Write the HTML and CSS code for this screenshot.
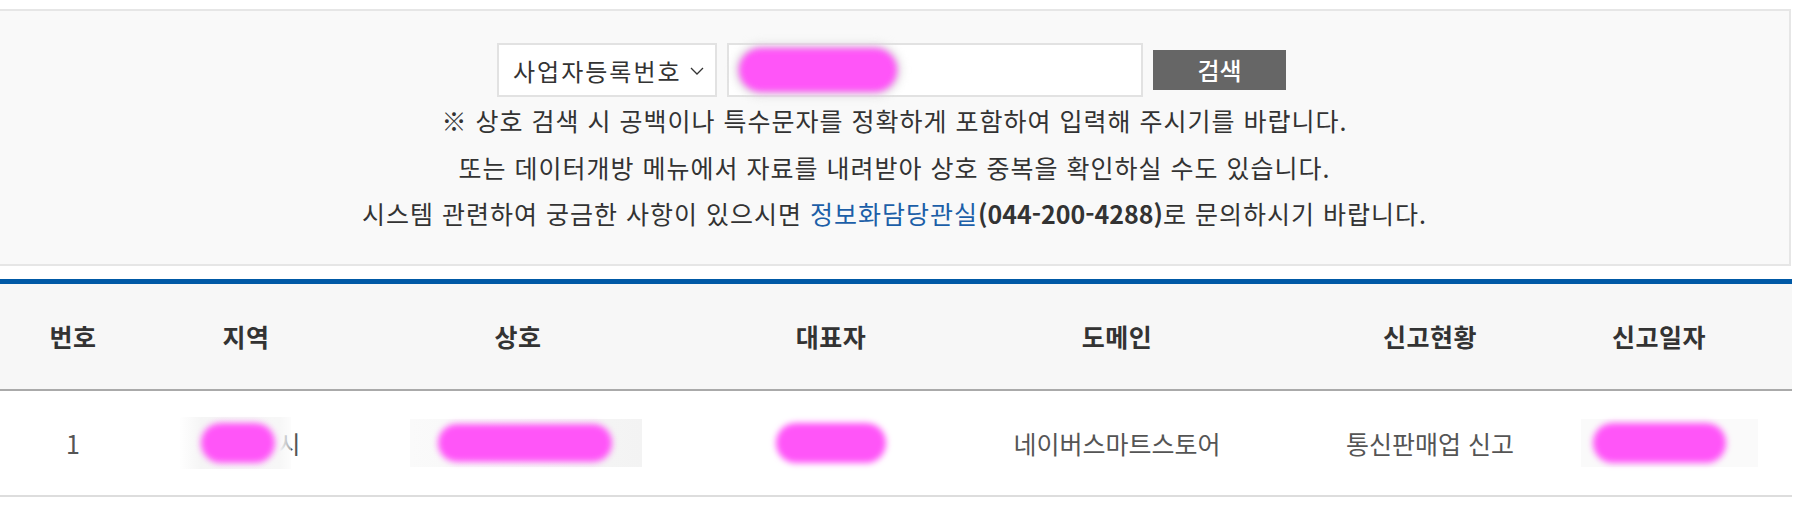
FILE: index.html
```html
<!DOCTYPE html>
<html lang="ko">
<head>
<meta charset="utf-8">
<link rel="stylesheet" href="styles.css">
</head>
<body>
<div class="page">
  <section class="search-panel">
    <form class="search-row">
      <div class="select-box">
        <span>사업자등록번호</span>
        <svg class="chev" width="14" height="8" viewBox="0 0 14 8"><path d="M1 1 L7 7 L13 1" fill="none" stroke="#333" stroke-width="1.3"/></svg>
      </div>
      <div class="input-box"><span class="blob blob-input"></span></div>
      <button type="button" class="btn-search">검색</button>
    </form>
    <p class="note">※ 상호 검색 시 공백이나 특수문자를 정확하게 포함하여 입력해 주시기를 바랍니다.</p>
    <p class="note">또는 데이터개방 메뉴에서 자료를 내려받아 상호 중복을 확인하실 수도 있습니다.</p>
    <p class="note">시스템 관련하여 궁금한 사항이 있으시면 <a class="link">정보화담당관실</a><b>(044-200-4288)</b>로 문의하시기 바랍니다.</p>
  </section>

  <div class="table">
    <div class="row head">
      <div class="c c1">번호</div>
      <div class="c c2">지역</div>
      <div class="c c3">상호</div>
      <div class="c c4">대표자</div>
      <div class="c c5">도메인</div>
      <div class="c c6">신고현황</div>
      <div class="c c7">신고일자</div>
    </div>
    <div class="row body">
      <div class="c c1">1</div>
      <div class="c c2"><span class="blur-bg bg-region"><span class="blob blob-region"></span></span><span class="si">시</span></div>
      <div class="c c3"><span class="blur-bg bg-name"><span class="blob blob-name"></span></span></div>
      <div class="c c4"><span class="blob blob-rep"></span></div>
      <div class="c c5">네이버스마트스토어</div>
      <div class="c c6">통신판매업 신고</div>
      <div class="c c7"><span class="blur-bg bg-date"><span class="blob blob-date"></span></span></div>
    </div>
  </div>
</div>
</body>
</html>
```
FILE: styles.css
```css
* { box-sizing: border-box; }
html, body { margin: 0; padding: 0; background: #fff; }
body {
  font-family: "Noto Sans CJK KR", "Noto Sans", sans-serif;
  color: #333;
}
.page {
  width: 1792px;
  padding-top: 9px;
}
.search-panel {
  width: 1791px;
  background: #f9f9f9;
  border: 2px solid #e6e6e6;
  border-left: none;
  padding: 32px 0 27px;
  text-align: center;
}
.search-row {
  display: flex;
  justify-content: center;
  align-items: center;
  gap: 10px;
  margin: 0 0 0 -6px;
}
.select-box {
  width: 220px;
  height: 54px;
  background: #fff;
  border: 2px solid #e2e2e2;
  display: flex;
  align-items: center;
  padding-left: 14px;
  gap: 8px;
  font-size: 24px;
  letter-spacing: 2px;
  color: #333;
}
.chev { margin-top: 2px; flex: none; }
.input-box {
  width: 416px;
  height: 54px;
  background: #fff;
  border: 2px solid #e2e2e2;
  position: relative;
}
.btn-search {
  width: 133px;
  height: 40px;
  background: #666;
  color: #fff;
  border: none;
  font-family: inherit;
  font-size: 24px;
  font-weight: 500;
  padding: 0;
  line-height: 40px;
}
.note {
  margin: 0;
  font-size: 25px;
  line-height: 46.5px;
  color: #333;
  letter-spacing: 1px;
}
.note .link { color: #1c5fa8; }
.note b { font-weight: 700; color: #333; letter-spacing: 0; }

.table {
  margin-top: 13px;
  border-top: 5px solid #0059a6;
  width: 1792px;
}
.row {
  display: grid;
  grid-template-columns: 146px 200px 344px 282px 290px 336px 122px;
  padding-right: 72px;
  align-items: center;
}
.row.head {
  height: 107px;
  background: #f7f7f7;
  border-bottom: 2px solid #aaa;
  font-weight: 700;
  font-size: 25px;
  letter-spacing: 0.5px;
  color: #333;
}
.row.body {
  height: 106px;
  border-bottom: 2px solid #ddd;
  font-size: 25px;
  color: #555;
}
.c {
  text-align: center;
  display: flex;
  justify-content: center;
  align-items: center;
  white-space: nowrap;
}
.blob {
  display: inline-block;
  background: #ff55f8;
  border-radius: 20px;
  filter: blur(3px);
}
.blur-bg {
  display: inline-flex;
  align-items: center;
  background: #f6f6f6;
  flex: none;
}
.blob-input {
  position: absolute;
  left: 10px;
  top: 3px;
  width: 158px;
  height: 44px;
  border-radius: 22px;
  box-shadow: 0 0 6px 4px #ddd;
}
.bg-region {
  position: relative;
  z-index: 1;
  width: 112px;
  height: 52px;
  padding-left: 22px;
  margin-left: -12px;
  background: linear-gradient(90deg, #fff 0%, #f5f5f5 20%, #f7f7f7 90%, rgba(250,250,250,0.5) 100%);
}
.blob-region { width: 74px; height: 40px; }
.si { margin-left: -14px; color: #555; }
.bg-name { width: 232px; height: 48px; padding-left: 28px; margin-left: 16px; background: linear-gradient(90deg, #fafafa, #f3f3f3); }
.blob-name { width: 174px; height: 38px; }
.blob-rep { width: 110px; height: 40px; }
.bg-date { width: 177px; height: 48px; padding-left: 12px; margin-left: 21px; background: #fafafa; }
.blob-date { width: 133px; height: 40px; }
```
